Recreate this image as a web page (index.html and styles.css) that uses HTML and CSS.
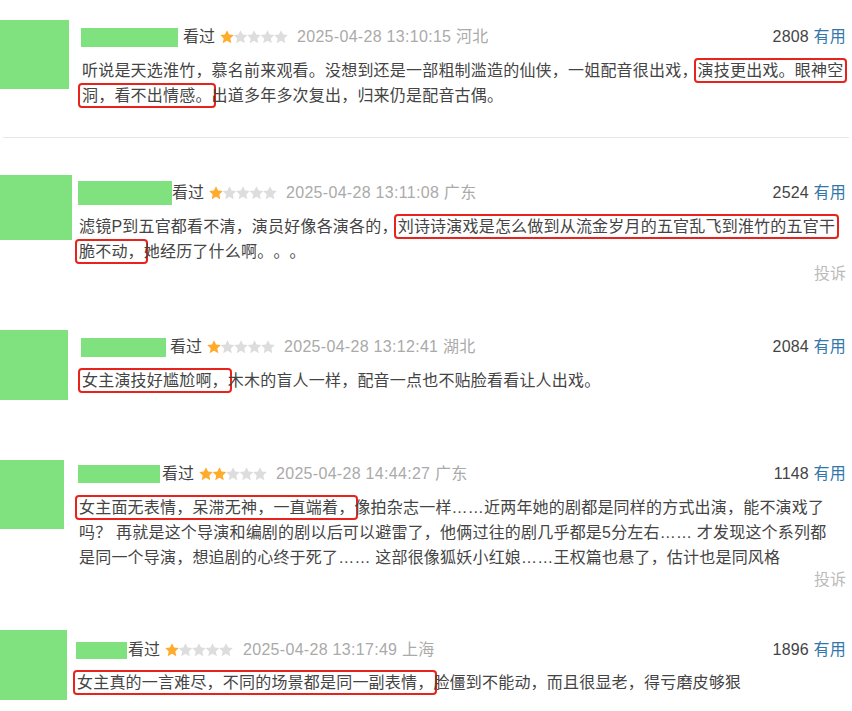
FILE: index.html
```html
<!DOCTYPE html>
<html lang="zh-CN">
  <head>
    <meta charset="UTF-8" />
    <meta name="viewport" content="width=device-width, initial-scale=1.0" />
    <title>短评</title>
    <link rel="stylesheet" href="styles.css">
  </head>
  <body>
    <!-- shared star shape -->
    <svg class="defs" width="0" height="0">
      <symbol id="star" viewBox="0 0 14 14">
        <polygon points="7,0.2 9.1,4.6 13.8,5.1 10.3,8.4 11.3,13.3 7,10.8 2.7,13.3 3.7,8.4 0.2,5.1 4.9,4.6" />
      </symbol>
    </svg>

    <div class="review-list">
      <!-- review 1 -->
      <div class="review review-1">
        <div class="avatar"></div>
        <div class="review-main">
          <div class="review-info">
            <div class="review-meta">
              <span class="user-name"></span>
              <span class="status">看过</span>
              <svg class="rating" width="68" height="14" viewBox="0 0 68 14">
                <use href="#star" x="0" width="14" height="14" class="star-on" />
                <use href="#star" x="13.5" width="14" height="14" class="star-off" />
                <use href="#star" x="27" width="14" height="14" class="star-off" />
                <use href="#star" x="40.5" width="14" height="14" class="star-off" />
                <use href="#star" x="54" width="14" height="14" class="star-off" />
              </svg>
              <span class="review-time">2025-04-28 13:10:15 河北</span>
            </div>
            <div class="votes">2808 <a class="vote-link" href="#">有用</a></div>
          </div>
          <p class="review-text">
            听说是天选淮竹，慕名前来观看。没想到还是一部粗制滥造的仙侠，一姐配音很出戏，<span class="mark">演技更出戏。眼神空</span><br><span class="mark">洞，看不出情感。</span>出道多年多次复出，归来仍是配音古偶。
          </p>
        </div>
      </div>

      <div class="divider"></div>

      <!-- review 2 -->
      <div class="review review-2">
        <div class="avatar"></div>
        <div class="review-main">
          <div class="review-info">
            <div class="review-meta">
              <span class="user-name"></span>
              <span class="status">看过</span>
              <svg class="rating" width="68" height="14" viewBox="0 0 68 14">
                <use href="#star" x="0" width="14" height="14" class="star-on" />
                <use href="#star" x="13.5" width="14" height="14" class="star-off" />
                <use href="#star" x="27" width="14" height="14" class="star-off" />
                <use href="#star" x="40.5" width="14" height="14" class="star-off" />
                <use href="#star" x="54" width="14" height="14" class="star-off" />
              </svg>
              <span class="review-time">2025-04-28 13:11:08 广东</span>
            </div>
            <div class="votes">2524 <a class="vote-link" href="#">有用</a></div>
          </div>
          <p class="review-text">
            滤镜P到五官都看不清，演员好像各演各的，<span class="mark">刘诗诗演戏是怎么做到从流金岁月的五官乱飞到淮竹的五官干</span><br><span class="mark">脆不动，</span>她经历了什么啊。。。
          </p>
          <div class="report">投诉</div>
        </div>
      </div>

      <!-- review 3 -->
      <div class="review review-3">
        <div class="avatar"></div>
        <div class="review-main">
          <div class="review-info">
            <div class="review-meta">
              <span class="user-name"></span>
              <span class="status">看过</span>
              <svg class="rating" width="68" height="14" viewBox="0 0 68 14">
                <use href="#star" x="0" width="14" height="14" class="star-on" />
                <use href="#star" x="13.5" width="14" height="14" class="star-off" />
                <use href="#star" x="27" width="14" height="14" class="star-off" />
                <use href="#star" x="40.5" width="14" height="14" class="star-off" />
                <use href="#star" x="54" width="14" height="14" class="star-off" />
              </svg>
              <span class="review-time">2025-04-28 13:12:41 湖北</span>
            </div>
            <div class="votes">2084 <a class="vote-link" href="#">有用</a></div>
          </div>
          <p class="review-text">
            <span class="mark">女主演技好尴尬啊，</span>木木的盲人一样，配音一点也不贴脸看看让人出戏。
          </p>
        </div>
      </div>

      <!-- review 4 -->
      <div class="review review-4">
        <div class="avatar"></div>
        <div class="review-main">
          <div class="review-info">
            <div class="review-meta">
              <span class="user-name"></span>
              <span class="status">看过</span>
              <svg class="rating" width="68" height="14" viewBox="0 0 68 14">
                <use href="#star" x="0" width="14" height="14" class="star-on" />
                <use href="#star" x="13.5" width="14" height="14" class="star-on" />
                <use href="#star" x="27" width="14" height="14" class="star-off" />
                <use href="#star" x="40.5" width="14" height="14" class="star-off" />
                <use href="#star" x="54" width="14" height="14" class="star-off" />
              </svg>
              <span class="review-time">2025-04-28 14:44:27 广东</span>
            </div>
            <div class="votes">1148 <a class="vote-link" href="#">有用</a></div>
          </div>
          <p class="review-text">
            <span class="mark">女主面无表情，呆滞无神，一直端着，</span>像拍杂志一样……近两年她的剧都是同样的方式出演，能不演戏了<br>吗？ 再就是这个导演和编剧的剧以后可以避雷了，他俩过往的剧几乎都是5分左右…… 才发现这个系列都<br>是同一个导演，想追剧的心终于死了…… 这部很像狐妖小红娘……王权篇也悬了，估计也是同风格
          </p>
          <div class="report">投诉</div>
        </div>
      </div>

      <!-- review 5 -->
      <div class="review review-5">
        <div class="avatar"></div>
        <div class="review-main">
          <div class="review-info">
            <div class="review-meta">
              <span class="user-name"></span>
              <span class="status">看过</span>
              <svg class="rating" width="68" height="14" viewBox="0 0 68 14">
                <use href="#star" x="0" width="14" height="14" class="star-on" />
                <use href="#star" x="13.5" width="14" height="14" class="star-off" />
                <use href="#star" x="27" width="14" height="14" class="star-off" />
                <use href="#star" x="40.5" width="14" height="14" class="star-off" />
                <use href="#star" x="54" width="14" height="14" class="star-off" />
              </svg>
              <span class="review-time">2025-04-28 13:17:49 上海</span>
            </div>
            <div class="votes">1896 <a class="vote-link" href="#">有用</a></div>
          </div>
          <p class="review-text">
            <span class="mark">女主真的一言难尽，不同的场景都是同一副表情，</span>脸僵到不能动，而且很显老，得亏磨皮够狠
          </p>
        </div>
      </div>
    </div>
  </body>
</html>
```

FILE: styles.css
```css
/* basic styling */
* {
  margin: 0;
  padding: 0;
  box-sizing: border-box;
}
body {
  font-family: "Liberation Sans", "Noto Sans CJK SC", sans-serif;
  font-size: 16px;
  color: #444444;
  background-color: #ffffff;
  overflow: hidden;
  text-spacing-trim: space-all;
}
.defs {
  position: absolute;
}

/* one review row: avatar + content */
.review {
  display: flex;
  align-items: flex-start;
}
.avatar {
  flex-shrink: 0;
  background-color: #80e17f;
}
.review-main {
  flex: 1;
  padding-right: 6px;
}

/* header line */
.review-info {
  display: flex;
  justify-content: space-between;
  align-items: center;
  line-height: 20px;
  white-space: nowrap;
}
.review-meta {
  display: flex;
  align-items: center;
}
.user-name {
  display: inline-block;
  background-color: #80e17f;
}
.status {
  margin-left: 5px;
}
.rating {
  margin-left: 5px;
}
.star-on {
  fill: #ffac2d;
}
.star-off {
  fill: #dddddd;
}
.review-time {
  margin-left: 9px;
  color: #aaaaaa;
  letter-spacing: 0.3px;
}
.votes {
  letter-spacing: 0.2px;
}
.vote-link {
  color: #3377aa;
  text-decoration: none;
}

/* review text */
.review-text {
  margin-top: 11px;
  line-height: 25px;
  padding-left: 1px;
  white-space: nowrap;
  letter-spacing: 0.2px;
}
.mark {
  border: 2px solid #e8231b;
  border-radius: 4px;
  padding: 2px 2px;
  margin: 0 -4px;
}
.report {
  text-align: right;
  color: #bbbbbb;
  line-height: 20px;
}

.divider {
  height: 1px;
  margin: 29px 3px 0;
  background-color: #e6e6e6;
}

/* per review sizes (cropped screenshots differ a little) */
.review-1 {
  margin-top: 20px;
}
.review-1 .avatar {
  width: 69px;
  height: 69px;
}
.review-1 .review-main {
  margin-left: 12px;
  padding-top: 7px;
}
.review-1 .user-name {
  width: 97px;
  height: 19px;
}

.review-2 {
  margin-top: 37px;
}
.review-2 .avatar {
  width: 72px;
  height: 65px;
}
.review-2 .review-main {
  margin-left: 6px;
  padding-top: 6px;
}
.review-2 .user-name {
  width: 94px;
  height: 24px;
}
.review-2 .status {
  margin-left: 0;
}
.review-2 .review-text {
  margin-top: 9px;
}

.review-3 {
  margin-top: 46px;
}
.review-3 .avatar {
  width: 68px;
  height: 70px;
}
.review-3 .review-main {
  margin-left: 13px;
  padding-top: 7px;
}
.review-3 .user-name {
  width: 85px;
  height: 19px;
}
.review-3 .status {
  margin-left: 4px;
}

.review-4 {
  margin-top: 60px;
}
.review-4 .avatar {
  width: 64px;
  height: 69px;
}
.review-4 .review-main {
  margin-left: 14px;
  padding-top: 4px;
}
.review-4 .user-name {
  width: 82px;
  height: 18px;
}
.review-4 .status {
  margin-left: 2px;
}

.review-5 {
  margin-top: 40px;
}
.review-5 .avatar {
  width: 67px;
  height: 70px;
}
.review-5 .review-main {
  margin-left: 9px;
  padding-top: 10px;
}
.review-5 .user-name {
  width: 51px;
  height: 17px;
}
.review-5 .status {
  margin-left: 1px;
}
.review-5 .review-time {
  margin-left: 10px;
}
.review-5 .review-text {
  margin-top: 10px;
}
```
